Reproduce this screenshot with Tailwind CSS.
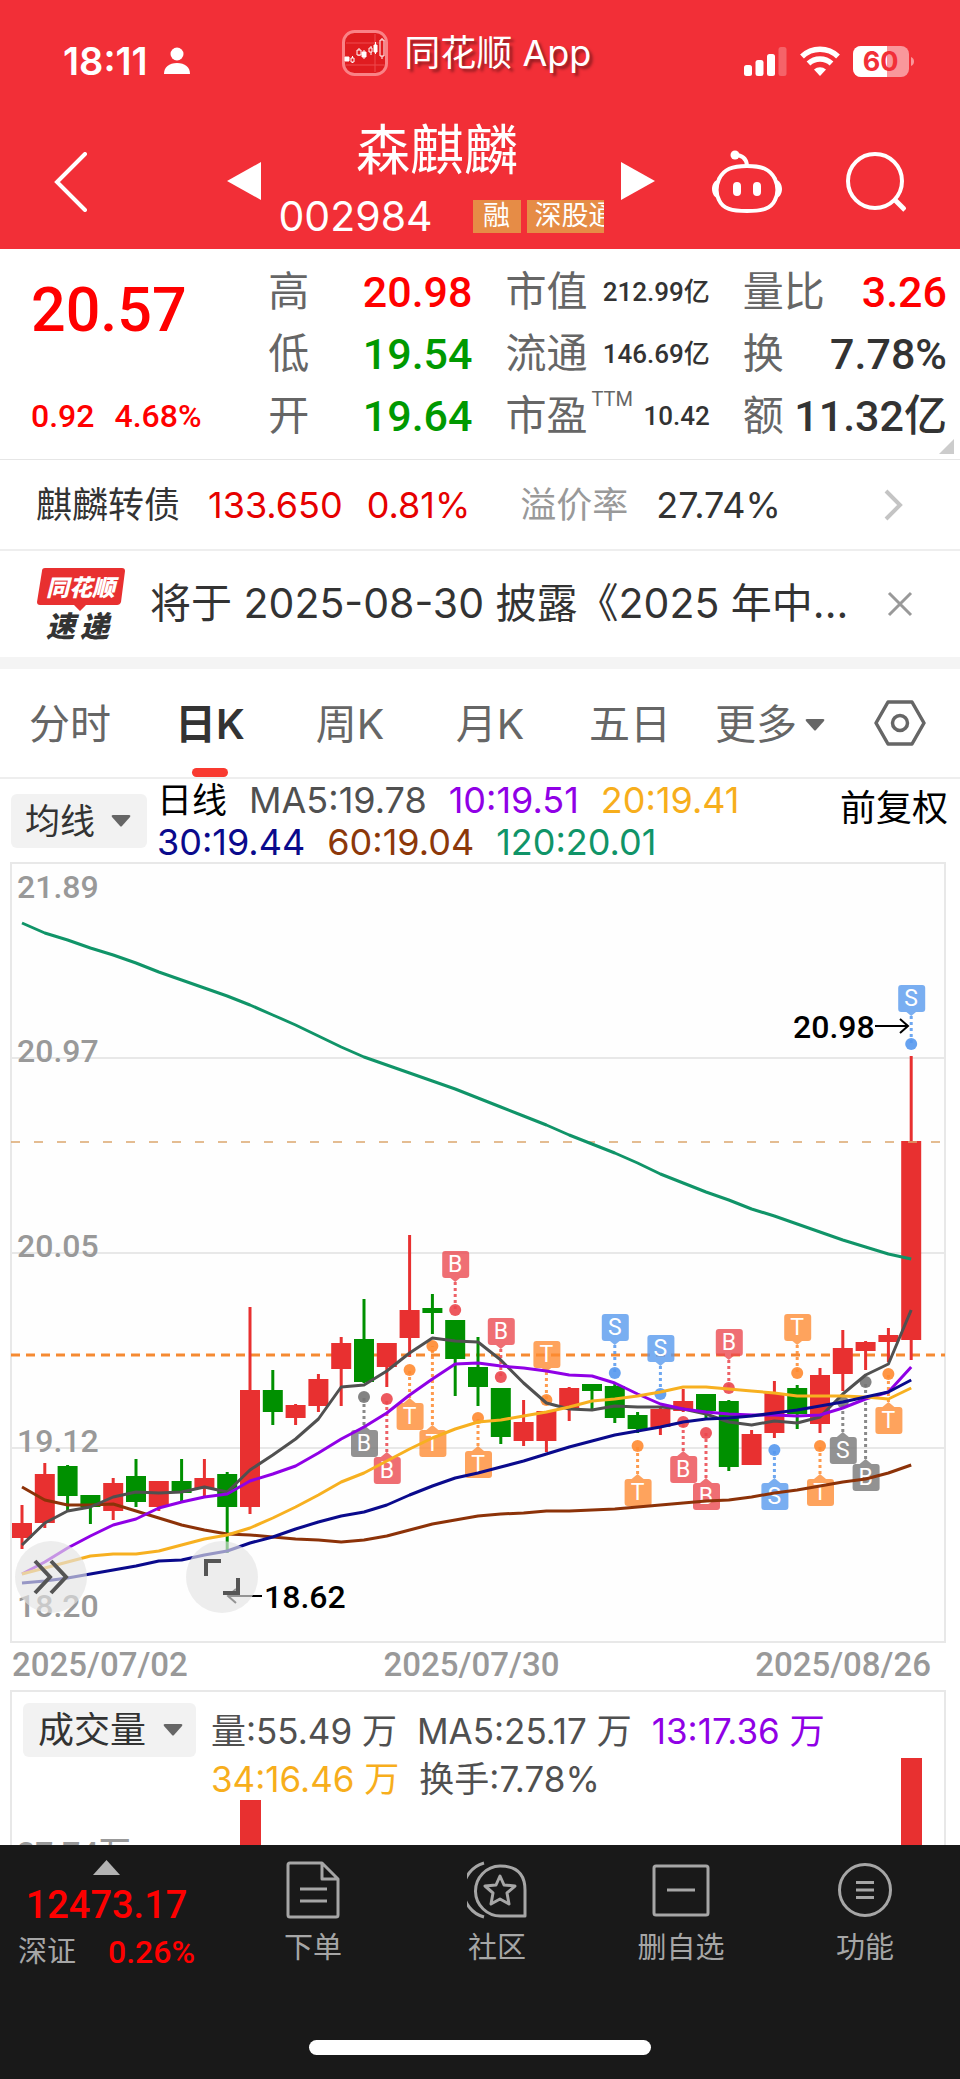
<!DOCTYPE html>
<html lang="zh-CN">
<head>
    <meta charset="UTF-8">
    <meta name="viewport" content="width=device-width, initial-scale=1.0">
    <title>森麒麟 002984</title>
    <script src="https://cdn.jsdelivr.net/npm/@tailwindcss/browser@4"></script>
</head>
<body class="bg-white text-[#333] font-['Inter','Noto_Sans_CJK_SC',sans-serif]">

    <!-- 顶部：状态栏 + 标题栏 -->
    <header class="bg-[#f22f37] text-white">
        <div class="flex h-[122px] items-center justify-between pl-[63px] pr-[45px]">
            <div class="flex items-center gap-4">
                <span class="text-[38px] leading-none font-semibold">18:11</span>
                <svg class="h-[28px] w-[26px]" viewBox="0 0 26 28" fill="currentColor"><circle cx="13" cy="7" r="6.5"/><path d="M0 27c0-7 5-11 13-11s13 4 13 11z"/></svg>
            </div>
            <div class="mb-4 flex items-center gap-4">
                <svg class="size-[46px]" viewBox="0 0 46 46">
                    <rect x="1.5" y="1.5" width="43" height="43" rx="11" fill="#e01c20" stroke="#fa8286" stroke-width="3"/>
                    <path d="M4 13h38M4 35h38M33 4v38" stroke="#ee4a4e" stroke-width="1"/>
                    <g fill="#fff" stroke="#fff" stroke-width="1">
                        <path d="M3 27h4v4H3zM20 22h4v5h-4zM32 15h3v7h-3z"/>
                        <path d="M10.500 26v7M17 18v8M22 20v9M29 16v9M33.500 12v12M40 8v21"/>
                        <path d="M9 28h3v4H9zM15 20h4v5h-4zM27 18h3v4h-3zM38 10h4v16h-4z" fill="#e01c20"/>
                    </g>
                </svg>
                <span class="text-[36px] leading-none text-shadow-[3px_3px_3px_rgb(0_0_0/0.4)]">同花顺 App</span>
            </div>
            <div class="flex items-center gap-[13px]">
                <svg class="h-[30px] w-[43px]" viewBox="0 0 43 30" fill="#fff"><rect x="0" y="19" width="8" height="11" rx="2.500"/><rect x="11.500" y="14" width="8" height="16" rx="2.500"/><rect x="23" y="8" width="8" height="22" rx="2.500"/><rect x="34.500" y="1" width="8" height="29" rx="2.500" opacity=".25"/></svg>
                <svg class="h-[30px] w-[40px]" viewBox="0 0 40 30" fill="none" stroke="#fff" stroke-width="5.500"><path d="M2 10.500a26 26 0 0 1 36 0M8.500 17.500a17 17 0 0 1 23 0"/><path d="M20 30l-6-6.500a9.500 9.500 0 0 1 12 0z" fill="#fff" stroke="none"/></svg>
                <svg class="h-[31px] w-[62px]" viewBox="0 0 62 31">
                    <rect width="56" height="31" rx="8" fill="#f9979b"/>
                    <path d="M8 0h26v31H8a8 8 0 0 1-8-8V8a8 8 0 0 1 8-8z" fill="#fff"/>
                    <path d="M58 11c4 1 4 8 0 9z" fill="#f9979b"/>
                    <text x="27.500" y="25" text-anchor="middle" font-size="27" font-weight="700" fill="#f22f37">60</text>
                </svg>
            </div>
        </div>

        <div class="grid h-[127px] grid-cols-[227px_1fr_305px]">
            <a href="#" aria-label="返回" class="flex items-center pb-2 pl-[54px]">
                <svg class="h-[60px] w-[34px]" viewBox="0 0 34 60" fill="none" stroke="#fff" stroke-width="4" stroke-linecap="round"><path d="M31 2L3 30l28 28"/></svg>
            </a>
            <div class="flex items-start justify-between">
                <button type="button" aria-label="上一只" class="mt-[40px]">
                    <svg class="h-[38px] w-[34px]" viewBox="0 0 34 38" fill="#fff"><path d="M0 19L34 0v38z"/></svg>
                </button>
                <div class="w-[325px]">
                    <h1 class="pr-2 text-center text-[54px] leading-[58px] font-normal">森麒麟</h1>
                    <div class="mt-[14px] flex h-[44px] items-center overflow-hidden">
                        <span class="shrink-0 text-[41px] leading-[44px]">002984</span>
                        <span class="ml-auto h-[33px] w-[48px] shrink-0 bg-[#e68c46] text-center text-[27px] leading-[32px]">融</span>
                        <span class="ml-[6px] h-[33px] w-[77px] shrink-0 overflow-hidden bg-[#e68c46] pl-2 text-[27px] leading-[32px] whitespace-nowrap">深股通</span>
                    </div>
                </div>
                <button type="button" aria-label="下一只" class="mt-[40px]">
                    <svg class="h-[38px] w-[34px]" viewBox="0 0 34 38" fill="#fff"><path d="M34 19L0 0v38z"/></svg>
                </button>
            </div>
            <div class="flex items-center justify-between pb-2 pl-[57px] pr-[54px]">
                <button type="button" aria-label="问财助手">
                    <svg class="h-[64px] w-[70px]" viewBox="0 0 70 64" fill="none" stroke="#fff" stroke-width="4">
                        <path d="M35 16C50 16 58 19 63 29c3 7 3 15 0 21-4 9-13 11-28 11S11 59 7 50c-3-6-3-14 0-21 5-10 13-13 28-13z"/>
                        <path d="M23 5c7 0 11 3 12 10"/>
                        <circle cx="23" cy="5" r="4.500" fill="#fff" stroke="none"/>
                        <path d="M6 30c-3 0-6 4-6 9s3 9 6 9zM64 30c3 0 6 4 6 9s-3 9-6 9z" fill="#fff" stroke="none"/>
                        <path d="M25 36v6M45 36v6" stroke-width="8" stroke-linecap="round"/>
                    </svg>
                </button>
                <button type="button" aria-label="搜索">
                    <svg class="size-[60px]" viewBox="0 0 60 60" fill="none" stroke="#fff" stroke-width="4"><circle cx="29" cy="29" r="27"/><path d="M48 47l11 11" stroke-width="5"/></svg>
                </button>
            </div>
        </div>
    </header>

    <main>
        <!-- 行情数据 -->
        <section class="relative grid grid-cols-4 gap-x-[33px] border-b border-[#e6e6e6] pt-3 pr-[13px] pb-3 pl-[31px] font-['Roboto','Noto_Sans_CJK_SC',sans-serif] font-medium">
            <div class="flex flex-col justify-between text-[#f00]">
                <p class="pt-[18px] text-[61px] leading-[62px]">20.57</p>
                <p class="flex h-[62px] items-center gap-5 text-[32px]"><span>0.92</span><span>4.68%</span></p>
            </div>
            <dl class="text-[43px] leading-[62px]">
                <div class="flex justify-between"><dt class="text-[41px] font-normal text-[#666]">高</dt><dd class="text-[#f00]">20.98</dd></div>
                <div class="flex justify-between"><dt class="text-[41px] font-normal text-[#666]">低</dt><dd class="text-[#090]">19.54</dd></div>
                <div class="flex justify-between"><dt class="text-[41px] font-normal text-[#666]">开</dt><dd class="text-[#090]">19.64</dd></div>
            </dl>
            <dl class="text-[26px] leading-[62px]">
                <div class="flex justify-between"><dt class="text-[41px] font-normal text-[#666]">市值</dt><dd>212.99亿</dd></div>
                <div class="flex justify-between"><dt class="text-[41px] font-normal text-[#666]">流通</dt><dd>146.69亿</dd></div>
                <div class="flex justify-between"><dt class="flex text-[41px] font-normal text-[#666]">市盈<sup class="top-0 ml-1 text-[20px] leading-[28px]">TTM</sup></dt><dd>10.42</dd></div>
            </dl>
            <dl class="text-[43px] leading-[62px]">
                <div class="flex justify-between"><dt class="text-[41px] font-normal text-[#666]">量比</dt><dd class="text-[#f00]">3.26</dd></div>
                <div class="flex justify-between"><dt class="text-[41px] font-normal text-[#666]">换</dt><dd>7.78%</dd></div>
                <div class="flex justify-between"><dt class="text-[41px] font-normal text-[#666]">额</dt><dd>11.32亿</dd></div>
            </dl>
            <svg class="absolute right-[6px] bottom-[5px] size-[15px]" viewBox="0 0 15 15" fill="#ccc"><path d="M15 0v15H0z"/></svg>
        </section>

        <!-- 关联转债 -->
        <a href="#" class="flex h-[91px] items-center border-b-2 border-[#eee] pr-[57px] pl-9 text-[36px]">
            <span>麒麟转债</span>
            <span class="ml-7 text-[#e60000]">133.650</span>
            <span class="ml-6 text-[#e60000]">0.81%</span>
            <span class="ml-[50px] text-[#999]">溢价率</span>
            <span class="ml-7">27.74%</span>
            <svg class="ml-auto h-[32px] w-[19px]" viewBox="0 0 19 32" fill="none" stroke="#c4c4c4" stroke-width="4"><path d="M2 2l14 14L2 30"/></svg>
        </a>

        <!-- 速递 -->
        <div class="flex h-[106px] items-center pr-[47px] pl-[37px]">
            <svg class="h-[72px] w-[88px] shrink-0 font-['Noto_Sans_CJK_SC',sans-serif]" viewBox="0 0 88 72">
                <path d="M8 0h77q3 0 3 3l-4 31q-1 3-4 3H49l-6 6-6-6H3q-3 0-3-3L5 3q0-3 3-3z" fill="#e83030"/>
                <text x="9" y="28" font-size="23" font-weight="900" font-style="italic" fill="#fff">同花顺</text>
                <text x="9" y="69" font-size="29" font-weight="900" font-style="italic" fill="#333">速</text>
                <text x="43" y="69" font-size="29" font-weight="900" font-style="italic" fill="#333">递</text>
            </svg>
            <a href="#" class="ml-[25px] truncate text-[41px]">将于 2025-08-30 披露《2025 年中...</a>
            <button type="button" aria-label="关闭" class="ml-auto shrink-0">
                <svg class="size-[26px]" viewBox="0 0 26 26" fill="none" stroke="#999" stroke-width="3"><path d="M2 2l22 22M24 2L2 24"/></svg>
            </button>
        </div>
        <div class="h-3 bg-[#f4f4f4]"></div>

        <!-- 周期切换 -->
        <nav class="grid h-[110px] grid-cols-[repeat(6,1fr)_120px] items-stretch border-b-2 border-[#eee] pt-1 text-[41px] text-[#666]">
            <button type="button">分时</button>
            <button type="button" class="relative font-semibold text-[#333]">日K<span class="absolute bottom-0 left-1/2 h-[9px] w-[36px] -translate-x-1/2 rounded-full bg-[#f93a30]"></span></button>
            <button type="button">周K</button>
            <button type="button">月K</button>
            <button type="button">五日</button>
            <button type="button" aria-haspopup="true" class="flex items-center justify-center gap-2">更多<svg class="h-[12px] w-[20px]" viewBox="0 0 20 12" fill="#666"><path d="M2 0h16q2 0 1 2l-8 9q-1 1-2 0L1 2q-1-2 1-2z"/></svg></button>
            <button type="button" aria-label="设置" class="flex items-center justify-center pb-1">
                <svg class="h-[46px] w-[52px]" viewBox="0 0 52 46" fill="none" stroke="#666" stroke-width="3.500" stroke-linejoin="round"><path d="M14 2h24l12 21-12 21H14L2 23z"/><circle cx="26" cy="23" r="7.500"/></svg>
            </button>
        </nav>

        <!-- 均线图例 -->
        <div class="flex h-[83px] items-start pr-3 pl-[11px]">
            <div class="relative mt-[15px]">
                <select aria-label="主图指标" class="h-[54px] w-[136px] appearance-none rounded-md bg-[#f2f2f2] pl-[14px] text-[35px] leading-none">
                    <option>均线</option>
                </select>
                <svg class="pointer-events-none absolute top-[21px] right-[16px] h-[12px] w-[20px]" viewBox="0 0 20 12" fill="#666"><path d="M2 0h16q2 0 1 2l-8 9q-1 1-2 0L1 2q-1-2 1-2z"/></svg>
            </div>
            <div class="ml-[10px] text-[36px] leading-[42px]">
                <div class="flex gap-[22px]"><span class="text-[35px] text-black">日线</span><span class="text-[#505050]">MA5:19.78</span><span class="text-[#9000e6]">10:19.51</span><span class="text-[#f7ae1c]">20:19.41</span></div>
                <div class="flex gap-[22px]"><span class="text-[#0a0a8c]">30:19.44</span><span class="text-[#8c380a]">60:19.04</span><span class="text-[#109468]">120:20.01</span></div>
            </div>
            <button type="button" class="mt-1 ml-auto text-[36px] leading-[50px] text-black">前复权</button>
        </div>

        <!-- K线图 -->
        <div class="relative mr-[14px] ml-[10px]">
            <svg id="kline" class="block w-full font-['Roboto',sans-serif]" viewBox="10 862 936 781"></svg>
            <button type="button" aria-label="展开" class="absolute bottom-[30px] left-[5px] flex size-[72px] items-center justify-center rounded-full bg-[#e4e4e4]/65">
                <svg class="h-[36px] w-[36px]" viewBox="0 0 36 36" fill="none" stroke="#555" stroke-width="4"><path d="M2 2l15 16L2 34M18 2l15 16-15 16"/></svg>
            </button>
            <button type="button" aria-label="全屏" class="absolute bottom-[30px] left-[176px] flex size-[72px] items-center justify-center rounded-full bg-[#e4e4e4]/65">
                <svg class="h-[38px] w-[38px]" viewBox="0 0 38 38" fill="none" stroke="#555" stroke-width="4"><path d="M3 18V3h15M35 20v15H20"/></svg>
            </button>
        </div>
        <div class="flex h-[47px] items-center justify-between pr-[29px] pb-1 pl-3 font-['Roboto',sans-serif] text-[33px] leading-none font-medium text-[#999]">
            <span>2025/07/02</span><span>2025/07/30</span><span>2025/08/26</span>
        </div>

        <!-- 成交量 -->
        <div class="relative mr-[14px] ml-[10px] h-[155px] overflow-hidden border-x-2 border-t-2 border-[#e8e8e8]">
            <svg id="volume" class="absolute top-0 left-0 w-full font-['Roboto','Noto_Sans_CJK_SC',sans-serif]" viewBox="12 1692 932 200"></svg>
            <div class="relative flex items-start pt-[11px] pl-[11px]">
                <div class="relative">
                    <select aria-label="副图指标" class="h-[54px] w-[173px] appearance-none rounded-md bg-[#f2f2f2] pl-[15px] text-[36px] leading-none">
                        <option>成交量</option>
                    </select>
                    <svg class="pointer-events-none absolute top-[21px] right-[13px] h-[12px] w-[20px]" viewBox="0 0 20 12" fill="#666"><path d="M2 0h16q2 0 1 2l-8 9q-1 1-2 0L1 2q-1-2 1-2z"/></svg>
                </div>
                <div class="ml-[15px] pt-1 text-[35px] leading-[48px] text-[#505050]">
                    <div class="flex gap-5"><span>量:55.49 万</span><span>MA5:25.17 万</span><span class="text-[#9000e6]">13:17.36 万</span></div>
                    <div class="flex gap-5"><span class="text-[#f7ae1c]">34:16.46 万</span><span>换手:7.78%</span></div>
                </div>
            </div>
        </div>
    </main>

    <!-- 底部工具栏 -->
    <footer class="bg-[#191919] text-[#a6a6a6]">
        <nav class="grid h-[195px] grid-cols-[221px_repeat(4,1fr)] items-start pr-[3px] text-[29px]">
            <a href="#" class="flex flex-col items-center pt-[15px] pr-2 font-['Roboto','Noto_Sans_CJK_SC',sans-serif]">
                <svg class="h-[15px] w-[27px]" viewBox="0 0 27 15" fill="#b3b3b3"><path d="M13.500 0L27 15H0z"/></svg>
                <span class="mt-2 text-[38px] leading-[44px] font-medium text-[#f00]">12473.17</span>
                <span class="flex items-center gap-8 leading-[50px]"><span>深证</span><span class="text-[32px] font-medium text-[#f00]">0.26%</span></span>
            </a>
            <a href="#" class="flex flex-col items-center pt-[16px]">
                <svg class="size-[58px]" viewBox="0 0 58 58" fill="none" stroke="#a6a6a6" stroke-width="3" stroke-linejoin="round"><path d="M6 2h32l16 16v36q0 2-2 2H6q-2 0-2-2V4q0-2 2-2zM38 2v16h16M16 28h27M16 40h27"/></svg>
                <span class="mt-[6px] leading-[46px]">下单</span>
            </a>
            <a href="#" class="flex flex-col items-center pt-[16px]">
                <svg class="h-[58px] w-[60px]" viewBox="0 0 60 58" fill="none" stroke="#a6a6a6" stroke-width="3" stroke-linejoin="round"><path d="M58 29v26H34a25 25 0 0 1-1-50q25 0 25 24zM17 2a28 28 0 0 0 0 54"/><path d="M33 15l4 9 11 1-8 7 2 11-9-5-9 5 2-11-8-7 11-1z"/></svg>
                <span class="mt-[6px] leading-[46px]">社区</span>
            </a>
            <a href="#" class="flex flex-col items-center pt-[16px]">
                <svg class="size-[58px]" viewBox="0 0 58 58" fill="none" stroke="#a6a6a6" stroke-width="3"><rect x="2" y="5" width="54" height="49" rx="2"/><path d="M15 29h28"/></svg>
                <span class="mt-[6px] leading-[46px]">删自选</span>
            </a>
            <a href="#" class="flex flex-col items-center pt-[16px]">
                <svg class="size-[58px]" viewBox="0 0 58 58" fill="none" stroke="#a6a6a6" stroke-width="3"><circle cx="29" cy="29" r="25.500"/><path d="M20 21.500h18M20 29h18M20 36.500h18"/></svg>
                <span class="mt-[6px] leading-[46px]">功能</span>
            </a>
        </nav>
        <div class="h-[39px]"><div class="mx-auto h-[15px] w-[342px] rounded-full bg-white"></div></div>
    </footer>

    <script>
        // K线: [颜色, 实体上沿, 实体下沿, 最高, 最低]
        const candles = [
            ['r', 1523, 1538, 1505, 1549], ['r', 1474, 1523, 1463, 1528], ['g', 1466, 1496, 1465, 1511], ['g', 1495, 1507, 1495, 1524],
            ['r', 1483, 1511, 1478, 1520], ['g', 1476, 1502, 1459, 1507], ['r', 1481, 1507, 1481, 1511], ['g', 1481, 1493, 1459, 1501],
            ['r', 1478, 1488, 1459, 1496], ['g', 1474, 1507, 1472, 1553], ['r', 1390, 1507, 1307, 1514], ['g', 1390, 1412, 1370, 1425],
            ['r', 1405, 1418, 1404, 1425], ['r', 1379, 1406, 1374, 1412], ['r', 1343, 1369, 1337, 1406], ['g', 1339, 1382, 1299, 1383],
            ['r', 1343, 1367, 1343, 1387], ['r', 1310, 1338, 1235, 1357], ['g', 1308, 1313, 1294, 1334], ['g', 1320, 1359, 1320, 1396],
            ['g', 1367, 1387, 1337, 1406], ['g', 1388, 1437, 1388, 1444], ['r', 1422, 1441, 1400, 1446], ['r', 1411, 1441, 1411, 1452],
            ['r', 1388, 1408, 1387, 1421], ['g', 1384, 1391, 1384, 1410], ['g', 1386, 1418, 1383, 1423], ['g', 1415, 1429, 1412, 1433],
            ['r', 1409, 1427, 1407, 1435], ['r', 1401, 1411, 1389, 1412], ['g', 1394, 1411, 1394, 1420], ['g', 1401, 1467, 1400, 1471],
            ['r', 1434, 1465, 1430, 1465], ['r', 1393, 1433, 1381, 1438], ['g', 1388, 1414, 1385, 1429], ['r', 1375, 1424, 1368, 1433],
            ['r', 1348, 1374, 1330, 1391], ['r', 1342, 1351, 1341, 1370], ['r', 1335, 1342, 1328, 1362], ['r', 1141, 1340, 1056, 1360]
        ];

        // 均线
        const lines = [
            { color: '#8c3208', y: [1487, 1500, 1505, 1505, 1504, 1511, 1518, 1525, 1530, 1534, 1535, 1537, 1539, 1540, 1542, 1540, 1536, 1530, 1524, 1520, 1516, 1514, 1513, 1511, 1511, 1510, 1509, 1507, 1505, 1503, 1501, 1500, 1497, 1493, 1490, 1486, 1482, 1479, 1473, 1465] },
            { color: '#505050', y: [1545, 1523, 1511, 1507, 1497, 1492, 1493, 1492, 1487, 1492, 1470, 1455, 1439, 1419, 1387, 1385, 1371, 1353, 1338, 1341, 1342, 1360, 1383, 1403, 1409, 1410, 1406, 1407, 1407, 1409, 1414, 1422, 1425, 1421, 1423, 1417, 1394, 1375, 1364, 1310] },
            { color: '#9000e6', y: [1574, 1562, 1548, 1536, 1525, 1519, 1508, 1502, 1497, 1494, 1481, 1474, 1466, 1453, 1439, 1427, 1413, 1395, 1379, 1364, 1363, 1366, 1368, 1371, 1375, 1376, 1383, 1394, 1404, 1409, 1412, 1414, 1415, 1415, 1416, 1415, 1408, 1399, 1392, 1367] },
            { color: '#f7b020', y: [1574, 1568, 1562, 1556, 1554, 1554, 1551, 1545, 1539, 1535, 1528, 1518, 1507, 1495, 1482, 1473, 1461, 1449, 1438, 1429, 1422, 1420, 1416, 1412, 1407, 1401, 1399, 1396, 1392, 1387, 1387, 1389, 1391, 1393, 1396, 1396, 1396, 1397, 1399, 1388] },
            { color: '#0a0a8c', y: [1583, 1581, 1578, 1574, 1570, 1566, 1561, 1560, 1555, 1551, 1543, 1537, 1529, 1522, 1516, 1512, 1505, 1495, 1486, 1478, 1473, 1467, 1461, 1454, 1447, 1441, 1435, 1431, 1427, 1422, 1419, 1418, 1416, 1413, 1410, 1406, 1402, 1397, 1392, 1380] },
            { color: '#109468', y: [923, 933, 940, 948, 955, 963, 972, 980, 988, 996, 1005, 1015, 1025, 1036, 1047, 1057, 1065, 1073, 1081, 1089, 1098, 1107, 1116, 1125, 1135, 1144, 1153, 1163, 1174, 1183, 1192, 1200, 1209, 1216, 1224, 1232, 1240, 1247, 1254, 1259] }
        ];

        // 买卖点: [序号, 字母, 颜色, 标签中心, 圆点]
        const marks = [
            [15, 'B', 'gray', 1443, 1397], [16, 'B', 'red', 1470, 1399], [17, 'T', 'orange', 1416, 1370], [18, 'T', 'orange', 1443, 1346],
            [19, 'B', 'red', 1264, 1310], [20, 'T', 'orange', 1464, 1418], [21, 'B', 'red', 1331, 1377], [23, 'T', 'orange', 1354, 1400],
            [26, 'S', 'blue', 1327, 1373], [27, 'T', 'orange', 1492, 1446], [28, 'S', 'blue', 1348, 1394], [29, 'B', 'red', 1469, 1422],
            [30, 'B', 'red', 1496, 1433], [31, 'B', 'red', 1342, 1388], [33, 'S', 'blue', 1496, 1450], [34, 'T', 'orange', 1327, 1373],
            [35, 'T', 'orange', 1492, 1446], [36, 'S', 'gray', 1450, 1402], [37, 'B', 'gray', 1477, 1382], [38, 'T', 'orange', 1420, 1374],
            [39, 'S', 'blue', 998, 1044]
        ];
        const markColor = { red: '#eb464d', orange: '#ff8a30', blue: '#5598ee', gray: '#757575' };
        const bodyColor = { r: '#e83030', g: '#009000' };

        const xAt = i => 22 + i * 22.8;

        let out = '<rect x="10" y="862" width="936" height="781" fill="#fefefe"/>';
        [1058, 1253, 1448].forEach(y => out += `<path d="M10 ${y}H946" stroke="#e8e8e8" stroke-width="2"/>`);
        out += '<rect x="11" y="863" width="934" height="779" fill="none" stroke="#e8e8e8" stroke-width="2"/>';

        [['21.89', 898], ['20.97', 1062], ['20.05', 1257], ['19.12', 1452], ['18.20', 1617]].forEach(([t, y]) =>
            out += `<text x="17" y="${y}" font-size="32" font-weight="500" fill="#999">${t}</text>`);

        out += '<path d="M11 1355H945" stroke="#f58a32" stroke-width="3" stroke-dasharray="9 6"/>';

        candles.forEach(([c, top, bottom, high, low], i) => {
            const x = xAt(i);
            out += `<path d="M${x} ${high}V${low}" stroke="${bodyColor[c]}" stroke-width="3"/>`;
            out += `<rect x="${x - 10}" y="${top}" width="20" height="${bottom - top}" fill="${bodyColor[c]}"/>`;
        });
        out += '<path d="M11 1142H940" stroke="#dba66e" stroke-width="1.500" stroke-dasharray="9 14"/>';

        marks.forEach(([i, letter, c, y, dot]) => {
            const x = xAt(i), dir = dot > y ? 1 : -1, edge = y + 13 * dir, color = markColor[c];
            out += `<path d="M${x} ${edge + 5 * dir}V${dot}" stroke="${color}" stroke-width="3" stroke-dasharray="3 3" opacity=".85"/>`;
            out += `<circle cx="${x}" cy="${dot}" r="6" fill="${color}" opacity=".9"/>`;
            out += `<g fill="${color}" opacity=".78"><rect x="${x - 13}" y="${y - 13}" width="27" height="27" rx="3"/><path d="M${x - 6} ${edge}l6 ${5 * dir}l6 ${-5 * dir}z"/></g>`;
            out += `<text x="${x}" y="${y + 8}" font-size="23" text-anchor="middle" fill="#fff">${letter}</text>`;
        });

        lines.forEach(l => {
            const pts = l.y.map((y, i) => `${xAt(i)},${y}`).join(' ');
            out += `<polyline points="${pts}" fill="none" stroke="${l.color}" stroke-width="3" stroke-linejoin="round"/>`;
        });

        // 最高价 / 最低价
        out += '<g font-size="32" font-weight="500" fill="#000"><text x="793" y="1038">20.98</text><text x="264" y="1608">18.62</text></g>';
        out += '<path d="M875 1026H908M900 1019l8 7-8 7M262 1596H228M236 1589l-8 7 8 7" fill="none" stroke="#000" stroke-width="2"/>';
        document.getElementById('kline').innerHTML = out;

        document.getElementById('volume').innerHTML =
            '<text x="17" y="1864" font-size="32" font-weight="500" fill="#999">27.74万</text>' +
            '<path d="M240 1800h21v92h-21zM901 1758h21v134h-21z" fill="#e83030"/>';
    </script>
</body>
</html>
